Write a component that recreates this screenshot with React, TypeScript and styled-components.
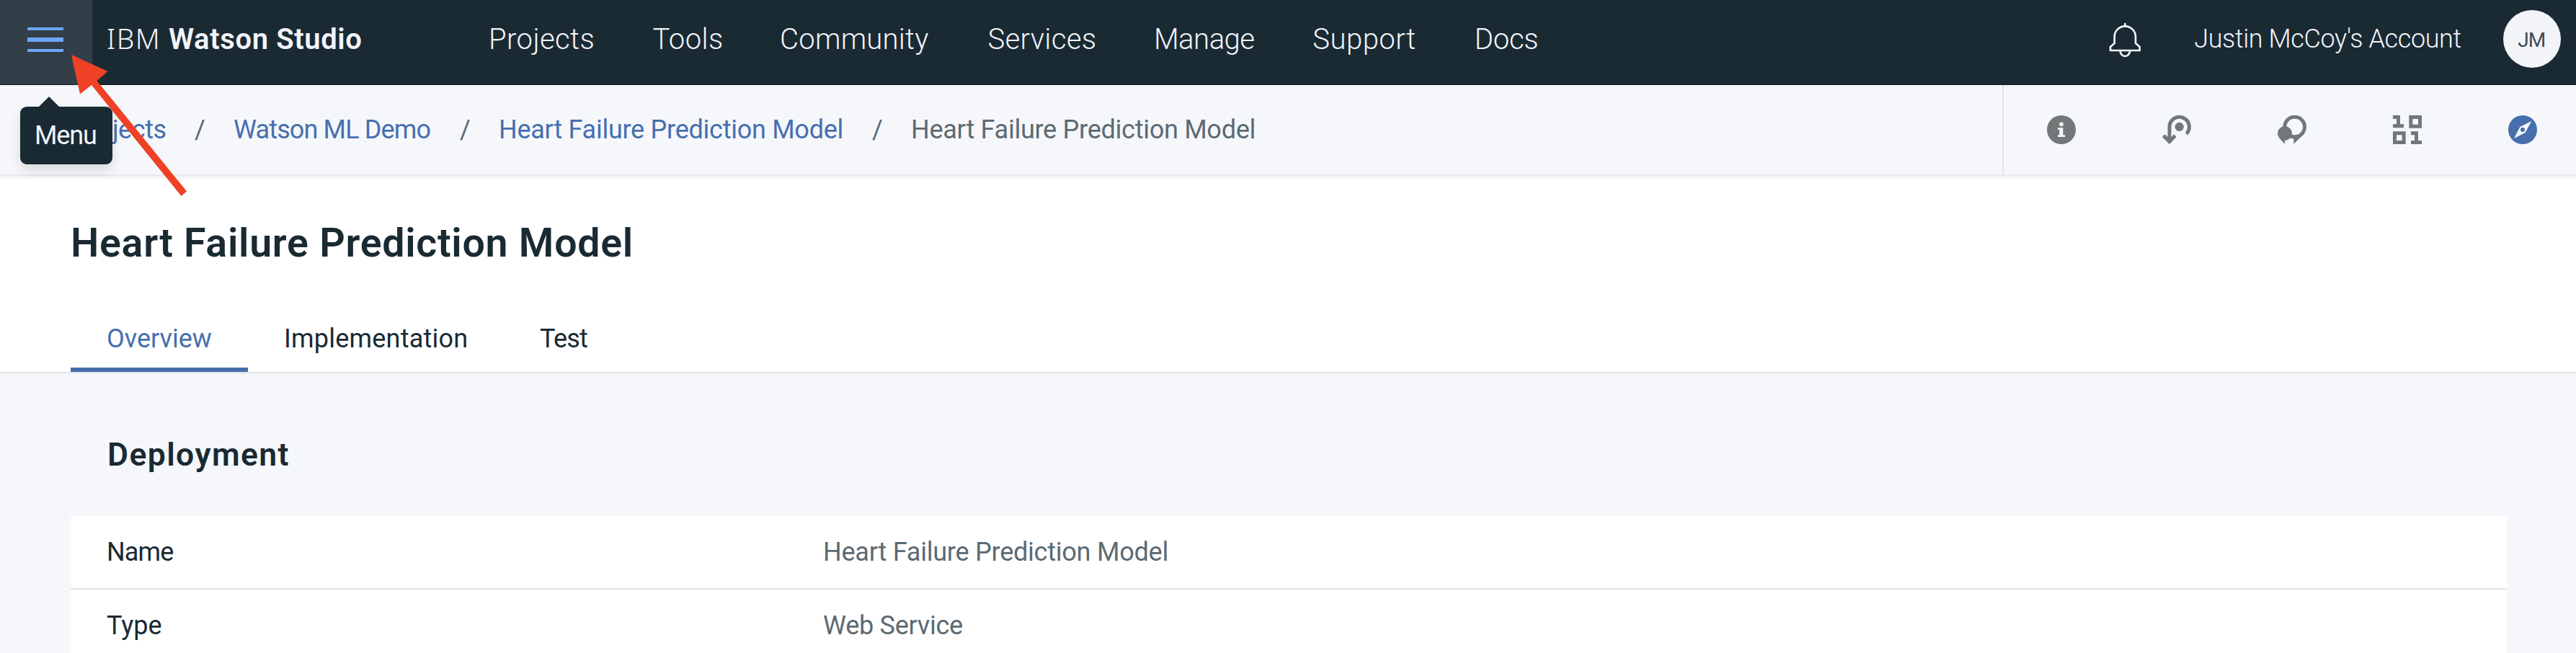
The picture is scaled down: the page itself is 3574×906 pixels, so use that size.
import React from "react";
import styled, { createGlobalStyle } from "styled-components";

const ink = "#1a2a33";
const light = "#f3f4f9";
const blue = "#476fae";
const slate = "#5c6a73";
const iconGray = "#707977";
const surface = "#f5f7fb";
const rule = "#dfe3e6";

const GlobalStyle = createGlobalStyle`
  * { box-sizing: border-box; }
  body {
    margin: 0;
    overflow: hidden;
    background: ${surface};
    color: ${ink};
    font-family: Roboto, "Liberation Sans", sans-serif;
    font-size: 36px;
  }
  a { color: inherit; text-decoration: none; }
`;

const Page = styled.div`
  position: relative;
  width: 3574px;
  height: 906px;
  overflow: hidden;
  display: flex;
  flex-direction: column;
`;

const Header = styled.header`
  flex: none;
  display: flex;
  height: 118px;
  background: ${ink};
  border-bottom: 1px solid #141c2f;
  color: ${light};
  line-height: 109px;
  white-space: nowrap;
`;

const MenuButton = styled.button`
  flex: none;
  width: 128px;
  height: 117px;
  border: 0;
  padding: 38px 40px 0 38px;
  background: #333f48;
  display: flex;
  flex-direction: column;
  gap: 10px;
`;

const MenuLine = styled.span<{ $thick?: boolean }>`
  width: 50px;
  height: ${(p) => (p.$thick ? 6 : 4)}px;
  background: #6ea7f7;
`;

const Brand = styled.div`
  flex: none;
  width: 550px;
  padding-left: 20px;
  font-size: 40px;
  display: flex;
`;

const Company = styled.span`
  width: 86px;
  font-family: "Noto Sans", sans-serif;
  font-size: 39px;
  font-weight: 300;
  letter-spacing: 1.5px;
  line-height: 106px;
`;

const Product = styled.strong`
  font-weight: 600;
  letter-spacing: 0.61px;
`;

const Nav = styled.nav`
  flex: 1;
  display: flex;
`;

const NavItem = styled.a<{ $width: number; $tracking: number }>`
  flex: none;
  width: ${(p) => p.$width}px;
  font-size: 40px;
  font-weight: 300;
  letter-spacing: ${(p) => p.$tracking}px;
`;

const Account = styled.div`
  flex: none;
  display: flex;
  align-items: flex-start;
  width: 648px;
`;

const BellIcon = styled.svg`
  flex: none;
  width: 45.3px;
  height: 50px;
  margin-top: 30.7px;
`;

const AccountName = styled.span`
  flex: none;
  width: 429px;
  margin-left: 73px;
  font-weight: 300;
  letter-spacing: -0.4px;
`;

const Avatar = styled.span`
  flex: none;
  width: 80px;
  height: 80px;
  margin-top: 14px;
  padding: 2px 0 0 20px;
  border-radius: 50%;
  background: ${light};
  color: #3b4a54;
  font-size: 28px;
  line-height: 80px;
  letter-spacing: -1px;
`;

const SubHeader = styled.div`
  flex: none;
  position: relative;
  z-index: 1;
  display: flex;
  height: 124px;
  background: ${surface};
  box-shadow: 0 2px 6px rgba(0, 0, 0, 0.14);
  line-height: 125px;
  white-space: nowrap;
`;

const Breadcrumb = styled.div`
  flex: none;
  width: 2778px;
  padding-left: 98px;
  display: flex;
`;

const Crumb = styled.a<{ $width?: number; $current?: boolean; $indent?: number; $tracking: number }>`
  flex: none;
  width: ${(p) => (p.$width ? `${p.$width}px` : "auto")};
  padding-left: ${(p) => p.$indent ?? 0}px;
  color: ${(p) => (p.$current ? slate : blue)};
  letter-spacing: ${(p) => p.$tracking}px;
`;

const Slash = styled.span`
  flex: none;
  width: 54px;
  color: ${slate};
`;

const Tools = styled.div`
  flex: none;
  display: flex;
  border-left: 2px solid ${rule};
`;

const ToolButton = styled.button`
  flex: none;
  width: 160px;
  height: 124px;
  padding: 0;
  border: 0;
  background: transparent;
  display: flex;
  align-items: center;
  justify-content: center;
`;

const ToolIcon = styled.svg<{ $active?: boolean }>`
  width: 40px;
  height: 40px;
  color: ${(p) => (p.$active ? blue : iconGray)};
  fill: currentColor;
`;

const TitleArea = styled.section`
  flex: none;
  height: 276px;
  padding-left: 98px;
  background: #fff;
  border-bottom: 2px solid ${rule};
  display: flex;
  flex-direction: column;
`;

const Title = styled.h1`
  margin: 0;
  padding-top: 56px;
  height: 184px;
  font-size: 55.5px;
  font-weight: 600;
  line-height: 80px;
  letter-spacing: 0.72px;
`;

const Tabs = styled.div`
  display: flex;
`;

const Tab = styled.a<{ $active?: boolean; $width: number; $tracking: number }>`
  width: ${(p) => p.$width}px;
  height: 92px;
  padding-left: 50px;
  border-bottom: 6px solid ${(p) => (p.$active ? blue : "transparent")};
  color: ${(p) => (p.$active ? blue : ink)};
  line-height: 93px;
  letter-spacing: ${(p) => p.$tracking}px;
`;

const Content = styled.main`
  flex: none;
  padding: 0 96px 0 98px;
`;

const SectionTitle = styled.h2`
  margin: 0;
  height: 198px;
  padding: 83px 0 0 51px;
  font-size: 44.5px;
  font-weight: 600;
  line-height: 60px;
  letter-spacing: 1.4px;
`;

const Table = styled.dl`
  margin: 0;
  background: #fff;
`;

const Row = styled.div`
  display: flex;
  height: 102px;
  padding-left: 50px;
  border-bottom: 2px solid ${rule};
  line-height: 100px;
`;

const Term = styled.dt<{ $tracking: number }>`
  width: 994px;
  letter-spacing: ${(p) => p.$tracking}px;
`;

const Value = styled.dd<{ $tracking: number }>`
  margin: 0;
  color: ${slate};
  letter-spacing: ${(p) => p.$tracking}px;
`;

const Tooltip = styled.div`
  position: absolute;
  z-index: 2;
  left: 28px;
  top: 148px;
  width: 128px;
  height: 80px;
  padding-left: 20px;
  border-radius: 9px;
  background: ${ink};
  color: ${light};
  box-shadow: 0 8px 16px rgba(0, 0, 0, 0.12);
  line-height: 80px;
  letter-spacing: -1.1px;

  &::before {
    content: "";
    position: absolute;
    left: 26px;
    top: -14px;
    border: 14px solid transparent;
    border-top: 0;
    border-bottom-color: ${ink};
  }
`;

const Pointer = styled.svg`
  position: absolute;
  z-index: 3;
  left: 90px;
  top: 70px;
  width: 180px;
  height: 210px;
  fill: #ef4125;
  pointer-events: none;
`;

const navItems: [string, number, number][] = [
  ["Projects", 227.4, 0.42],
  ["Tools", 176.7, 0.43],
  ["Community", 288.3, 0.24],
  ["Services", 230.6, 0.38],
  ["Manage", 220.4, -0.46],
  ["Support", 224.5, 0.48],
  ["Docs", 100, -0.25],
];

const InfoIcon = () => (
  <ToolIcon viewBox="0 0 120 120">
    <circle cx="60" cy="60" r="60" />
    <circle cx="60" cy="37" r="8.5" fill={surface} />
    <path d="M45 52h22v30h8v8H45v-8h7V60h-7z" fill={surface} />
  </ToolIcon>
);

const RouteIcon = () => (
  <ToolIcon viewBox="0 0 120 120">
    <path d="M30 98V48a41 41 0 1 1 70 29" fill="none" stroke="currentColor" strokeWidth="15" />
    <circle cx="71" cy="48" r="18.5" />
    <path d="M0 90l10-11 13 12h14l12-12 10 11-29 30z" />
  </ToolIcon>
);

const ChatIcon = () => (
  <ToolIcon viewBox="0 0 120 120">
    <circle cx="71" cy="48" r="49" />
    <path d="M112 76L67 119V98Q60 95 52 94L62 70H105z" />
    <circle cx="71" cy="48" r="34" fill={surface} />
    <circle cx="30" cy="75" r="30" />
    <path d="M7 95L30 119V98z" />
  </ToolIcon>
);

const DataIcon = () => (
  <ToolIcon viewBox="0 0 120 120" fillRule="evenodd">
    <path d="M0 0h30v37h15v15H0V37h15V15H0z" />
    <path d="M67 0h53v53H67zM82 15v23h23V15z" />
    <path d="M0 67h53v53H0zM15 82v23h23V82z" />
    <path d="M75 67h30v38h15v15H75v-15h15V82H75z" />
  </ToolIcon>
);

const CompassIcon = () => (
  <ToolIcon viewBox="0 0 120 120" $active>
    <circle cx="60" cy="60" r="60" />
    <path d="M97 24L71 72 24 96 49 48z" fill={surface} />
    <circle cx="60" cy="60" r="9" />
  </ToolIcon>
);

const toolIcons = [InfoIcon, RouteIcon, ChatIcon, DataIcon, CompassIcon];

export default function App() {
  return (
    <Page>
      <GlobalStyle />
      <Header>
        <MenuButton aria-label="Menu">
          <MenuLine />
          <MenuLine $thick />
          <MenuLine />
        </MenuButton>
        <Brand>
          <Company>IBM</Company>
          <Product>Watson Studio</Product>
        </Brand>
        <Nav>
          {navItems.map(([label, width, tracking]) => (
            <NavItem key={label} $width={width} $tracking={tracking}>
              {label}
            </NavItem>
          ))}
        </Nav>
        <Account>
          <BellIcon viewBox="80 62 136 150" fill="none" stroke={light} strokeWidth="8">
            <path d="M147 65v12" />
            <path d="M103 122a44 44 0 0 1 88 0v27l17 15v15H86v-15l17-15z" />
            <path d="M127 182a20 21 0 0 0 40 0" />
          </BellIcon>
          <AccountName>Justin McCoy's Account</AccountName>
          <Avatar>JM</Avatar>
        </Account>
      </Header>

      <SubHeader>
        <Breadcrumb>
          <Crumb $width={172} $indent={4} $tracking={-0.4}>Projects</Crumb>
          <Slash>/</Slash>
          <Crumb $width={314} $tracking={-0.86}>Watson ML Demo</Crumb>
          <Slash>/</Slash>
          <Crumb $width={518} $tracking={-0.26}>Heart Failure Prediction Model</Crumb>
          <Slash>/</Slash>
          <Crumb $current $tracking={-0.26}>Heart Failure Prediction Model</Crumb>
        </Breadcrumb>
        <Tools>
          {toolIcons.map((Icon, i) => (
            <ToolButton key={i}>
              <Icon />
            </ToolButton>
          ))}
        </Tools>
      </SubHeader>

      <TitleArea>
        <Title>Heart Failure Prediction Model</Title>
        <Tabs>
          <Tab $active $width={246} $tracking={0}>Overview</Tab>
          <Tab $width={355} $tracking={0.22}>Implementation</Tab>
          <Tab $width={170} $tracking={-0.8}>Test</Tab>
        </Tabs>
      </TitleArea>

      <Content>
        <SectionTitle>Deployment</SectionTitle>
        <Table>
          <Row>
            <Term $tracking={-0.84}>Name</Term>
            <Value $tracking={-0.23}>Heart Failure Prediction Model</Value>
          </Row>
          <Row>
            <Term $tracking={0}>Type</Term>
            <Value $tracking={-0.26}>Web Service</Value>
          </Row>
        </Table>
      </Content>

      <Tooltip>Menu</Tooltip>
      <Pointer viewBox="90 70 180 210">
        <path d="M99 76L149.5 99 134.5 112 259 265.5 251.5 272 127 118 111 130.5z" />
      </Pointer>
    </Page>
  );
}
